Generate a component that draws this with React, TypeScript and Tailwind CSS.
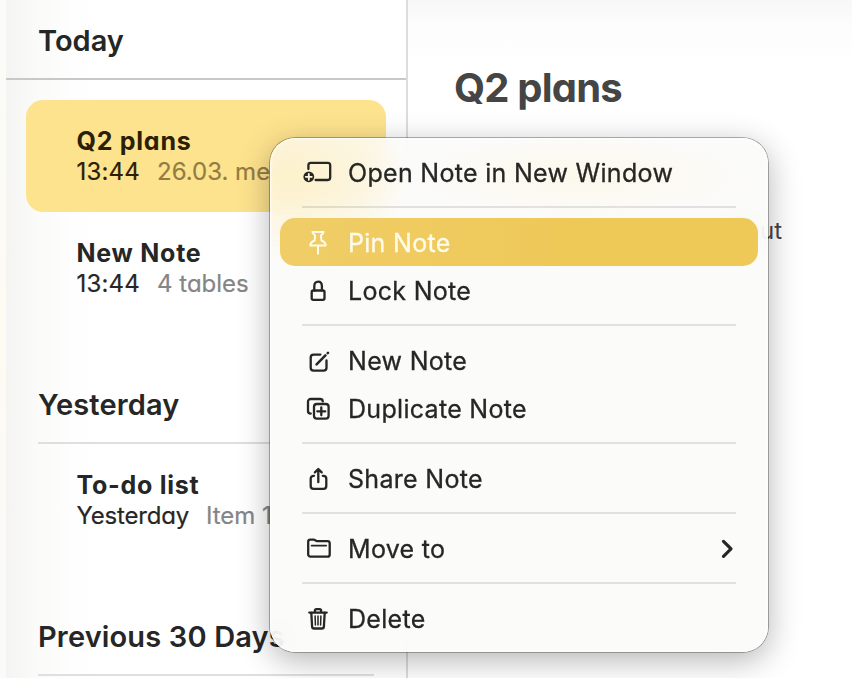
import type { ReactNode } from "react";
import { clsx } from "clsx";

const ICONS: Record<string, ReactNode> = {
  window: (
    <>
      <path d="M6.4 13V9.2a2.4 2.4 0 0 1 2.4-2.4h17a2.4 2.4 0 0 1 2.4 2.4v12.4a2.4 2.4 0 0 1-2.4 2.4H13.6" />
      <circle cx="6.8" cy="20.8" r="5.4" fill="currentColor" stroke="none" />
      <path d="M6.8 17.8v6M3.8 20.8h6" stroke="#fff5da" strokeWidth="1.8" />
    </>
  ),
  pin: (
    <path
      d="M10.4 5.9h11.2c-.2 1.7-1.3 2.7-2.7 3.5l.5 5.1c2.8 1.1 4.3 2.8 4.3 5.1H8.3c0-2.3 1.500-4 4.3-5.1l.5-5.1c-1.4-.8-2.5-1.8-2.7-3.5ZM16 20v7.8"
      strokeWidth="2"
    />
  ),
  lock: (
    <>
      <rect x="9.7" y="16.5" width="12.8" height="9.4" rx="1.6" />
      <path d="M12.3 16.5v-4.3c0-3 1.5-4.6 3.8-4.6s3.8 1.6 3.8 4.6v4.3" />
    </>
  ),
  compose: (
    <>
      <path d="M18.4 10.6h-6.8a2.9 2.9 0 0 0-2.9 2.9v10.2a2.9 2.9 0 0 0 2.9 2.9h10a2.9 2.9 0 0 0 2.9-2.9v-7.2" />
      <path d="M14.6 20.4l8.8-9M25.7 9.1l.3-.3" strokeWidth="2.5" />
    </>
  ),
  duplicate: (
    <>
      <rect x="12" y="12" width="14.6" height="14.6" rx="2.8" />
      <path d="M8.8 21.6h-.2A2.6 2.6 0 0 1 6 19V9.7A2.7 2.7 0 0 1 8.7 7h9.4a2.7 2.7 0 0 1 2.7 2.3" />
      <path d="M19.3 15.3v8M15.3 19.3h8" />
    </>
  ),
  share: (
    <>
      <path d="M12 13.8h-.4a2.9 2.9 0 0 0-2.9 2.9v7.2a2.9 2.9 0 0 0 2.9 2.9h9.8a2.9 2.9 0 0 0 2.9-2.9v-7.2a2.9 2.9 0 0 0-2.9-2.9h-.6" />
      <path d="M16.3 20.2V7.1M12.9 10.4l3.4-3.4 3.4 3.4" />
    </>
  ),
  folder: (
    <>
      <path d="M6.2 22.4V9.8a2.1 2.1 0 0 1 2.1-2.1h3.3c1.6 0 1.9 1.4 3.5 1.4h10.4a2.2 2.2 0 0 1 2.2 2.2v11.1a2.2 2.2 0 0 1-2.2 2.2H8.4a2.2 2.2 0 0 1-2.2-2.2Z" />
      <path d="M9.6 13.6h14.6" strokeWidth="1.7" />
    </>
  ),
  trash: (
    <>
      <path d="M7.3 10.6h17.4M12.9 10.4V8.7a1.6 1.6 0 0 1 1.6-1.6h3a1.6 1.6 0 0 1 1.6 1.6v1.7" />
      <path d="M9.3 10.8l.8 13.8a2 2 0 0 0 2 1.9h7.8a2 2 0 0 0 2-1.9l.8-13.8" />
      <path d="M13.1 14.1l.3 9M16 14.1v9M18.9 14.1l-.3 9" strokeWidth="1.5" />
    </>
  ),
};

type MenuItem = { icon: string; label: string; active?: boolean; submenu?: boolean };

const MENU: MenuItem[][] = [
  [{ icon: "window", label: "Open Note in New Window" }],
  [
    { icon: "pin", label: "Pin Note", active: true },
    { icon: "lock", label: "Lock Note" },
  ],
  [
    { icon: "compose", label: "New Note" },
    { icon: "duplicate", label: "Duplicate Note" },
  ],
  [{ icon: "share", label: "Share Note" }],
  [{ icon: "folder", label: "Move to", submenu: true }],
  [{ icon: "trash", label: "Delete" }],
];

function Glyph({ children }: { children: ReactNode }) {
  return (
    <svg
      viewBox="0 0 32 32"
      className="h-8 w-8 shrink-0 overflow-visible"
      fill="none"
      stroke="currentColor"
      strokeWidth="2.3"
      strokeLinecap="round"
      strokeLinejoin="round"
    >
      {children}
    </svg>
  );
}

function Note({ title, time, preview, selected }: { title: string; time: string; preview: string; selected?: boolean }) {
  return (
    <div
      className={clsx(
        "mx-5 h-28 shrink-0 overflow-hidden whitespace-nowrap rounded-[17px] pl-[50.5px] pt-[26px] leading-[30px] [font-feature-settings:'cv11']",
        selected ? "bg-[#fee38e] text-[#2b2005]" : "text-[#262626]",
      )}
    >
      <div className="text-[25px] font-bold tracking-[0.75px]">{title}</div>
      <div className="flex pt-px text-2xl leading-[30px] [-webkit-text-stroke:0.2px_currentColor]">
        <span className={time.includes(":") ? "tracking-[0.2px]" : "tracking-[-0.2px]"}>{time}</span>
        <span className={clsx("ml-[17px]", selected ? "text-[#937c43]" : "text-[#858585]")}>{preview}</span>
      </div>
    </div>
  );
}

function SectionHeader({ children }: { children: ReactNode }) {
  return (
    <div className="mx-8 flex h-[120px] shrink-0 items-end border-b-2 border-[#dfdfdf] pb-[19px] text-[29px] font-semibold leading-9 tracking-[0.15px] text-[#262626]">
      {children}
    </div>
  );
}

function ContextMenu() {
  return (
    <div className="absolute left-[270px] top-[138px] w-[498px] rounded-[25px] bg-[#fafaf9]/88 bg-[radial-gradient(ellipse_120px_85px_at_20px_40px,rgba(255,236,180,0.6),transparent),radial-gradient(ellipse_180px_42px_at_310px_38px,rgba(255,245,220,0.5),transparent)] p-2.5 shadow-[0_0_0_0.8px_rgba(0,0,0,0.38),inset_0_0_2px_1px_rgba(255,255,255,0.9),0_8px_32px_rgba(0,0,0,0.3)] backdrop-blur-[14px]">
      {MENU.map((group, i) => (
        <div key={i}>
          {i > 0 && <div className="mx-[22px] my-2.5 h-0.5 bg-black/10" />}
          {group.map((item) => (
            <div
              key={item.label}
              className={clsx(
                "flex h-12 items-center rounded-[15px] pl-[22px] pr-[15px]",
                item.active ? "bg-linear-to-r from-[#f0cd67] to-[#eec958] to-60% text-[#fffbea]" : "text-[#262624]",
              )}
            >
              <Glyph>{ICONS[item.icon]}</Glyph>
              <span className="ml-3.5 flex-1 whitespace-nowrap pt-[3px] text-[25px] tracking-[0.3px] [-webkit-text-stroke:0.3px_currentColor]">
                {item.label}
              </span>
              {item.submenu && (
                <Glyph>
                  <path d="M12.5 9.3l7.5 7.5-7.5 7.5" strokeWidth="3.1" />
                </Glyph>
              )}
            </div>
          ))}
        </div>
      ))}
    </div>
  );
}

export default function App() {
  return (
    <div className="relative flex h-[678px] w-[852px] overflow-hidden bg-white font-['Inter',sans-serif]">
      <div className="w-1.5 shrink-0 bg-linear-to-b from-[#fbfbf9] via-[#fdfbf2] to-[#fafafa]" />
      <aside className="flex w-[402px] shrink-0 flex-col overflow-hidden border-r-2 border-[#dcdcdc] bg-[linear-gradient(90deg,#f4f4f2,#fafaf9_28px,#fefefe_68px,#ffffff_100px)]">
        <div className="flex h-20 shrink-0 items-center border-b-2 border-[#c8c8c8] pl-8 pt-1 text-[29px] font-semibold text-[#262626]">
          Today
        </div>
        <div className="h-5 shrink-0" />
        <Note title="Q2 plans" time="13:44" preview="26.03. me" selected />
        <Note title="New Note" time="13:44" preview="4 tables" />
        <SectionHeader>Yesterday</SectionHeader>
        <Note title="To-do list" time="Yesterday" preview="Item 1" />
        <SectionHeader>Previous 30 Days</SectionHeader>
      </aside>
      <main className="flex-1 bg-[linear-gradient(180deg,#f7f7f7,#fcfcfc_22px,#ffffff_65px)] pl-[46px] pt-16 [font-feature-settings:'cv11']">
        <h1 className="text-[40px] font-bold leading-[48px] tracking-[-0.8px] text-[#454545]">Q2 plans</h1>
        <p className="mt-[103px] w-[328px] text-right text-2xl leading-8 text-[#454545]">about</p>
      </main>
      <ContextMenu />
    </div>
  );
}
